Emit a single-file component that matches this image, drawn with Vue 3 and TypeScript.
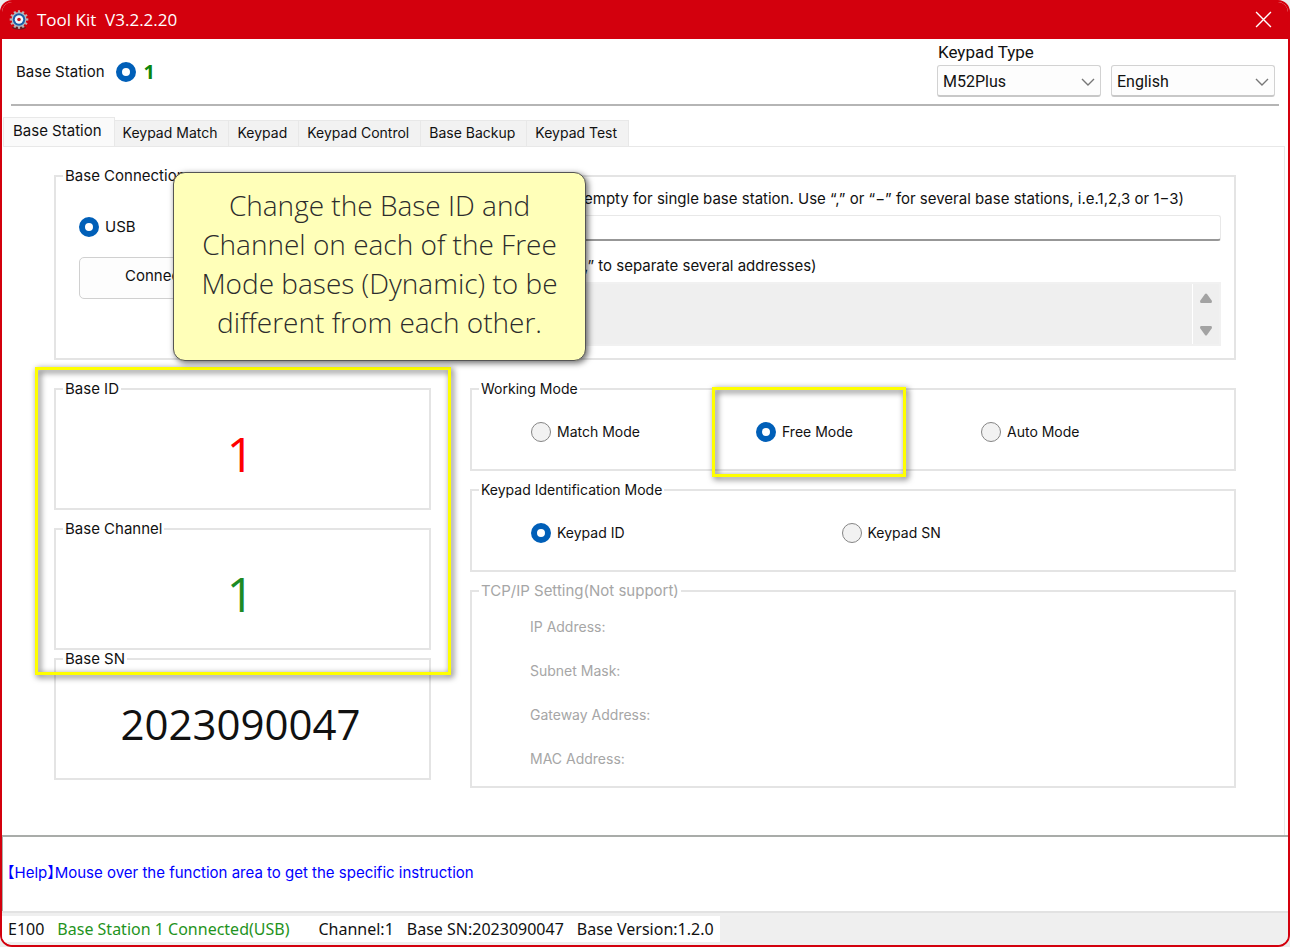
<script setup lang="ts">
import { ref } from 'vue'

const tabs: string[] = ['Base Station', 'Keypad Match', 'Keypad', 'Keypad Control', 'Base Backup', 'Keypad Test']
const activeTab = ref('Base Station')
const keypadType = ref('M52Plus')
const language = ref('English')
const station = ref('1')
const link = ref('usb')
const stationIds = ref('')
const workingMode = ref('Free Mode')
const workingModes: string[] = ['Match Mode', 'Free Mode', 'Auto Mode']
const idMode = ref('Keypad ID')
const idModes: string[] = ['Keypad ID', 'Keypad SN']
const network: string[] = ['IP Address:', 'Subnet Mask:', 'Gateway Address:', 'MAC Address:']
const teeth: number[] = [0, 30, 60, 90, 120, 150, 180, 210, 240, 270, 300, 330]
</script>

<template>
  <div class="window">
    <header class="titlebar">
      <svg class="gear" viewBox="0 0 20 20" aria-hidden="true">
        <ellipse cx="10" cy="17.6" rx="7" ry="2" fill="#6d1a1e" />
        <rect v-for="a in teeth" :key="a" x="8.9" y="0.2" width="2.2" height="4" fill="#b9b4b4" :transform="`rotate(${a} 10 9.5)`" />
        <circle cx="10" cy="9.5" r="7.4" fill="#b4bcc4" />
        <circle cx="10" cy="9.5" r="6.2" fill="#1b5fa8" />
        <circle cx="10" cy="9.5" r="4.2" fill="#f4f7fa" />
        <circle cx="10" cy="9.5" r="1.8" fill="#c8141c" />
      </svg>
      <h1>Tool Kit&nbsp; V3.2.2.20</h1>
      <button class="close" type="button" aria-label="Close">
        <svg viewBox="0 0 16 16" aria-hidden="true"><path d="M1 1 L15 15 M15 1 L1 15" stroke="#fff" stroke-width="1.3" fill="none" /></svg>
      </button>
    </header>

    <section class="toolbar">
      <div class="station">
        <span>Base Station</span>
        <label class="station-pick"><input v-model="station" type="radio" name="station" value="1" /><b>1</b></label>
      </div>
      <div class="pickers">
        <div class="picker">
          <label for="type">Keypad Type</label>
          <div class="select">
            <select id="type" v-model="keypadType"><option>M52Plus</option></select>
            <svg viewBox="0 0 14 8" aria-hidden="true"><path d="M1 1 L7 7 L13 1" fill="none" stroke="#777" stroke-width="1.4" /></svg>
          </div>
        </div>
        <div class="picker">
          <div class="select">
            <select v-model="language" aria-label="Language"><option>English</option></select>
            <svg viewBox="0 0 14 8" aria-hidden="true"><path d="M1 1 L7 7 L13 1" fill="none" stroke="#777" stroke-width="1.4" /></svg>
          </div>
        </div>
      </div>
    </section>

    <nav class="tabs" role="tablist">
      <button v-for="t in tabs" :key="t" type="button" role="tab" :aria-selected="t === activeTab" :class="{ active: t === activeTab }" @click="activeTab = t">{{ t }}</button>
    </nav>

    <main class="panel">
      <fieldset class="connection">
        <legend>Base Connection</legend>
        <div class="conn-body">
          <div class="conn-left">
            <label class="radio"><input v-model="link" type="radio" name="link" value="usb" />USB</label>
            <button class="connect" type="button">Connect</button>
          </div>
          <div class="conn-right">
            <label for="ids">empty for single base station. Use “,” or “−” for several base stations, i.e.1,2,3 or 1−3)</label>
            <input id="ids" v-model="stationIds" class="ids" type="text" />
            <label for="addresses">,” to separate several addresses)</label>
            <div class="addresses">
              <textarea id="addresses" disabled></textarea>
              <div class="scroll" aria-hidden="true">
                <svg viewBox="0 0 14 10"><path d="M6 1 Q7 0 8 1 L13 8 Q13 10 12 10 H2 Q1 10 1 8 Z" fill="#a3a3a3" /></svg>
                <svg viewBox="0 0 14 10"><path d="M6 9 Q7 10 8 9 L13 2 Q13 0 12 0 H2 Q1 0 1 2 Z" fill="#a3a3a3" /></svg>
              </div>
            </div>
          </div>
        </div>
        <aside class="callout">Change the Base ID and Channel on each of the Free Mode bases (Dynamic) to be different from each other.</aside>
      </fieldset>

      <div class="columns">
        <div class="left">
          <div class="marked">
            <fieldset class="value"><legend>Base ID</legend><output class="red">1</output></fieldset>
            <fieldset class="value"><legend>Base Channel</legend><output class="green">1</output></fieldset>
          </div>
          <fieldset class="value"><legend>Base SN</legend><output class="serial">2023090047</output></fieldset>
        </div>
        <div class="right">
          <fieldset class="choices three">
            <legend>Working Mode</legend>
            <div class="options">
              <label v-for="m in workingModes" :key="m" class="radio" :class="{ focus: m === 'Free Mode' }"><input v-model="workingMode" type="radio" name="working" :value="m" />{{ m }}</label>
            </div>
          </fieldset>
          <fieldset class="choices two">
            <legend>Keypad Identification Mode</legend>
            <div class="options">
              <label v-for="m in idModes" :key="m" class="radio"><input v-model="idMode" type="radio" name="identification" :value="m" />{{ m }}</label>
            </div>
          </fieldset>
          <fieldset class="network" disabled>
            <legend>TCP/IP Setting(Not support)</legend>
            <ul><li v-for="n in network" :key="n">{{ n }}</li></ul>
          </fieldset>
        </div>
      </div>
    </main>

    <section class="help"><p>【Help】Mouse over the function area to get the specific instruction</p></section>

    <footer class="status">
      <div class="status-text">
        <span>E100</span>
        <span class="ok">Base Station 1 Connected(USB)</span>
        <span>Channel:1</span>
        <span>Base SN:2023090047</span>
        <span>Base Version:1.2.0</span>
      </div>
    </footer>
  </div>
</template>

<style>
body {
  margin: 0;
  background: #ececec;
}
</style>

<style scoped>
*,
*::after {
  box-sizing: border-box;
}
.window {
  min-height: 100vh;
  display: flex;
  flex-direction: column;
  overflow: hidden;
  border: 2px solid #d3000d;
  border-radius: 12px;
  background: #fff;
  color: #111;
  font: 14px/20px Inter, "Noto Sans CJK JP", sans-serif;
}
button, input, select, textarea {
  font: inherit;
  color: inherit;
  margin: 0;
}
.titlebar {
  height: 37px;
  padding: 0 16px 2px 7px;
  display: flex;
  align-items: center;
  gap: 8px;
  background: #d3000d;
  color: #fff;
}
.gear {
  width: 20px;
  height: 20px;
}
h1 {
  margin: 0;
  flex: 1;
  font: 400 17px/24px "Open Sans", sans-serif;
}
.close {
  display: flex;
  padding: 0;
  border: 0;
  background: none;
}
.close svg {
  width: 17px;
  height: 17px;
}
.toolbar {
  height: 67px;
  margin: 0 9px;
  padding: 0 4px 0 5px;
  display: flex;
  justify-content: space-between;
  border-bottom: 2px solid #b5b5b5;
}
.station {
  display: flex;
  align-items: center;
  gap: 11px;
  font-size: 15px;
}
.station-pick {
  display: flex;
  align-items: center;
  gap: 8px;
}
.station b {
  font: 700 20px/24px "Open Sans", sans-serif;
  color: #0c860c;
}
input[type='radio'] {
  appearance: none;
  flex: none;
  width: 20px;
  height: 20px;
  border: 1px solid #858585;
  border-radius: 50%;
  background: #f2f2f2;
}
input[type='radio']:checked {
  border: 6px solid #005fb8;
  background: #fff;
}
.pickers {
  display: flex;
  align-items: flex-end;
  gap: 10px;
  padding-bottom: 7px;
  font: 16px/24px Roboto, sans-serif;
}
.picker {
  width: 164px;
}
.picker label {
  display: block;
  padding: 0 1px 1px;
  font-size: 17px;
}
.select {
  position: relative;
}
.select select {
  appearance: none;
  display: block;
  width: 100%;
  height: 32px;
  padding: 3px 5px 0;
  border: 1px solid #d2d2d2;
  border-bottom: 2px solid #c8c8c8;
  border-radius: 3px;
  background: #fdfdfd;
}
.select svg {
  position: absolute;
  right: 6px;
  top: 13px;
  width: 14px;
  height: 8px;
}
.tabs {
  display: flex;
  align-items: flex-end;
  margin-top: 11px;
  padding-left: 1px;
}
.tabs button {
  height: 26px;
  padding: 0 11px 1px 8px;
  border: solid #e8e8e8;
  border-width: 1px 1px 0 0;
  background: #f2f2f2;
}
.tabs .active {
  height: 29px;
  padding: 0 12px 3px 9px;
  border-left-width: 1px;
  background: #fafafa;
  font-size: 15px;
}
.panel {
  flex: 1;
  margin: 0 3px 0 1px;
  padding: 21px 48px 0 51px;
  border: solid #e8e8e8;
  border-width: 1px 1px 0 0;
}
fieldset {
  margin: 0;
  padding: 0;
  min-width: 0;
  border: 2px solid #e4e4e4;
}
legend {
  margin-left: 7px;
  padding: 0 2px;
  line-height: 16px;
}
.value legend,
.network legend,
.connection {
  font-size: 15px;
}
.connection {
  position: relative;
  height: 192px;
}
.conn-body {
  display: flex;
  padding: 5px 13px 0 23px;
}
.conn-left {
  width: 148px;
  padding-top: 28px;
}
.radio {
  display: flex;
  align-items: center;
  gap: 6px;
}
.conn-left .radio {
  height: 20px;
}
.connect {
  width: 152px;
  height: 42px;
  margin-top: 20px;
  padding: 0 0 4px;
  border: 1px solid #d0d0d0;
  border-radius: 5px;
  background: #fdfdfd;
}
.conn-right {
  flex: 1;
  margin-left: 160px;
}
.conn-right > label {
  display: block;
  padding-left: 197px;
  white-space: nowrap;
}
.ids {
  display: block;
  width: 100%;
  height: 26px;
  margin: 6px 0 15px;
  border: 1px solid #e8e8e8;
  border-bottom: 2px solid #979797;
  border-radius: 3px;
  background: #fff;
}
.addresses {
  display: flex;
  height: 64px;
  margin-top: 6px;
  border: 2px solid #f1f1f1;
  background: #efefef;
}
textarea {
  flex: 1;
  display: block;
  resize: none;
  border: 0;
  background: #efefef;
}
.scroll {
  width: 27px;
  padding: 9px 0 8px;
  display: flex;
  flex-direction: column;
  align-items: center;
  justify-content: space-between;
  border-left: 1px solid #fff;
}
.scroll svg {
  width: 14px;
  height: 10px;
}
.callout {
  position: absolute;
  z-index: 3;
  left: 117px;
  top: -12px;
  width: 413px;
  padding: 13px 20px 18px;
  border: 1px solid #555;
  border-radius: 12px;
  background: #ffffb9;
  box-shadow: 2px 2px 6px rgba(0, 0, 0, 0.6);
  color: #2c2c2c;
  text-align: center;
  font: 300 28px/39px "Open Sans", sans-serif;
}
.columns {
  display: grid;
  grid-template-columns: 377fr 766fr;
  gap: 39px;
  margin-top: 21px;
}
.marked {
  position: relative;
  display: grid;
  gap: 11px;
  margin-bottom: 1px;
}
.marked::after,
.focus::after {
  content: '';
  position: absolute;
  z-index: 2;
  border: 3px solid #ff0;
  filter: drop-shadow(2px 2px 3px rgba(0, 0, 0, 0.7));
  pointer-events: none;
}
.marked::after {
  inset: -14px -20px -25px -19px;
}
.value {
  height: 129px;
}
.value output {
  display: block;
  padding: 24px 4px 0 0;
  text-align: center;
  font: 48px/66px "Open Sans", sans-serif;
}
.value .serial {
  font-size: 42px;
}
.red {
  color: #f00;
}
.green {
  color: #1c8a24;
}
.right {
  display: grid;
  gap: 11px;
  align-content: start;
}
.choices {
  height: 90px;
}
.options {
  display: grid;
  height: 70px;
}
.three .options {
  grid-template-columns: repeat(3, 1fr);
  padding: 0 28px 0 59px;
}
.two .options {
  grid-template-columns: repeat(2, 1fr);
  padding: 0 82px 0 59px;
}
.focus {
  position: relative;
}
.focus::after {
  left: -44px;
  top: -10px;
  width: 194px;
  height: 90px;
}
.network {
  height: 205px;
  color: #a6a6a6;
}
ul {
  display: grid;
  gap: 24px;
  margin: 0;
  padding: 18px 0 0 58px;
  list-style: none;
}
.help {
  height: 76px;
  padding: 26px 4px;
  border: solid #a9aca9;
  border-width: 2px 0 0 1px;
  color: #00f;
  font-size: 15px;
}
.help p {
  margin: 0;
  font-feature-settings: 'halt';
}
.status {
  display: flex;
  height: 34px;
  border-top: 2px solid #e2e2e2;
  background: #efefef;
}
.status-text {
  display: flex;
  gap: 13px;
  margin: 3px 0 3px;
  padding: 0 6px;
  background: #fff;
  white-space: nowrap;
  font: 16px/26px "Noto Sans", sans-serif;
}
.ok {
  margin-right: 16px;
  color: #1f9322;
}
</style>
